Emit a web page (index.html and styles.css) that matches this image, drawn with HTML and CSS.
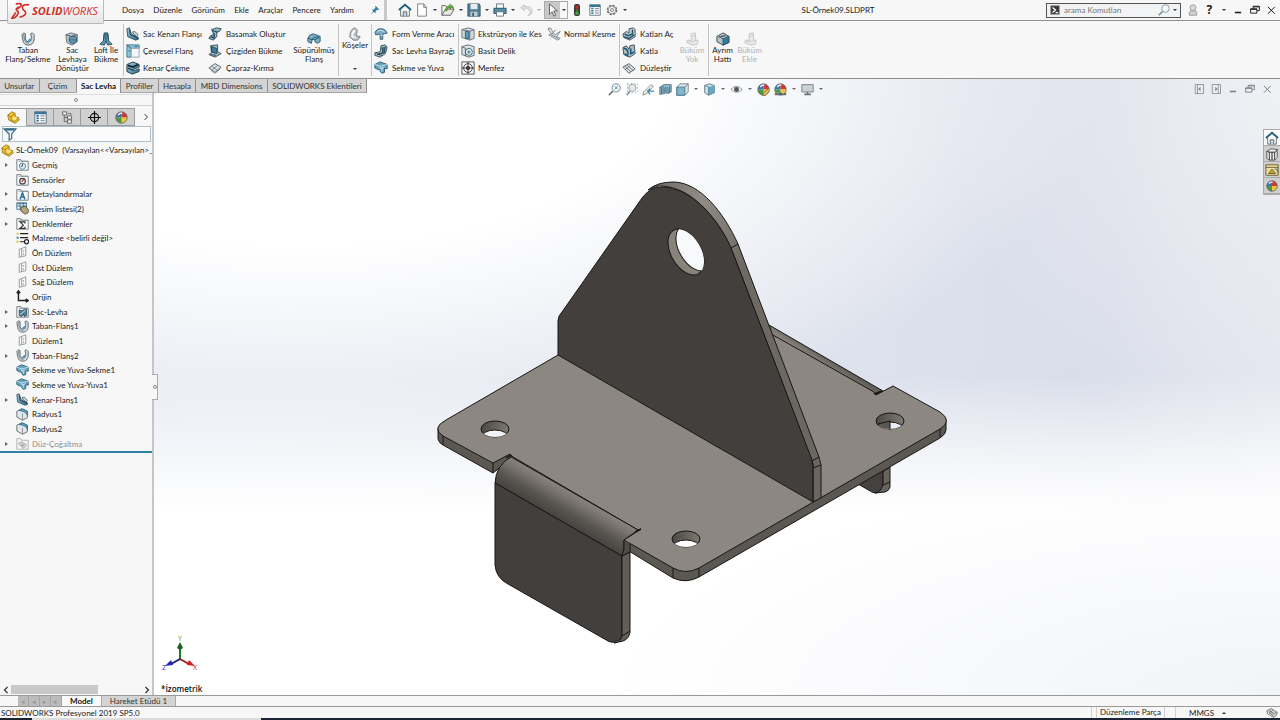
FILE: index.html
```html
<!DOCTYPE html>
<html lang="tr">
<head>
<meta charset="utf-8">
<title>SL-Örnek09.SLDPRT</title>
<link rel="stylesheet" href="styles.css">
</head>
<body>
<svg class="defs" aria-hidden="true">
<defs>
<linearGradient id="steel" x1="0" y1="0" x2="1" y2="1"><stop offset="0" stop-color="#9fcbdc"/><stop offset="1" stop-color="#2f7397"/></linearGradient>
<symbol id="flange" viewBox="0 0 16 16"><path d="M1 3l2-2 2 1v6q1 4 4 3 3-1 3-5l-1-4 2-1 2 2v6q-1 6-7 6-5 0-6-6z" fill="#d3d9dc" stroke="#4c5a62"/><path d="M8 9l3-2 1 3-3 2z" fill="#4995b5"/><path d="M3 2l1 7q1 4 5 4" fill="none" stroke="#6a7a82"/></symbol>
<symbol id="convert" viewBox="0 0 16 16"><path d="M1 3l6-2 7 2v8l-6 4-6-3z" fill="#bdc7cc" stroke="#596870"/><path d="M5 6q5-3 8 0v5q-4 4-8 0z" fill="#5b9dba" stroke="#2a566b"/><path d="M1 3l6 2 7-2M4 9h8" fill="none" stroke="#4a5961"/></symbol>
<symbol id="loft" viewBox="0 0 16 16"><path d="M6 1l-1 9-4 4 5 1 2-4 2 4 5-1-4-4-1-9z" fill="#579bb8" stroke="#35474f"/><path d="M8 1v10M6 2l-1 8M10 2l1 8" stroke="#234d63"/></symbol>
<symbol id="edge" viewBox="0 0 16 16"><path d="M1 2l3-1 2 7 8 4v2l-3 1-9-4z" fill="url(#steel)" stroke="#304b58"/><path d="M4 3l1 6 9 4M8 6l5 4" fill="none" stroke="#173746"/><path d="M7 6l3-1 4 4-2 2z" fill="#c7d7de" stroke="#4b5c65"/></symbol>
<symbol id="miter" viewBox="0 0 16 16"><path d="M1 1h14v4H6v10H1z" fill="#8fc4d7" stroke="#34738e"/><path d="M6 5h9v10H6z" fill="#f5f7f8" stroke="#98a4aa"/><path d="M1 1l5 4M3 8h2M10 3h3" stroke="#245267"/></symbol>
<symbol id="hem" viewBox="0 0 16 16"><path d="M1 4l7-3 7 3v3l-8 3-5-2 7 3 6-2v3l-8 3-6-3z" fill="url(#steel)" stroke="#24343d"/><path d="M2 5l6 2 6-3" fill="none" stroke="#15242d" stroke-width="2"/></symbol>
<symbol id="jog" viewBox="0 0 16 16"><path d="M4 3l6-2 5 1-2 3-3 1v5l-4 4-5-2 2-3 3-1V7z" fill="#8bb7c8" stroke="#2f4048"/><path d="M5 4l6 2M7 7v5M3 11l5 2" stroke="#26495a" stroke-width="1.5"/></symbol>
<symbol id="sketchbend" viewBox="0 0 16 16"><path d="M3 2l8-1v8l4 2-7 4-7-3 3-2z" fill="#a4bdc8" stroke="#354750"/><path d="M4 3l6 2v6l-6-2zM3 12l6 1" fill="#3d7d99" stroke="#254252"/></symbol>
<symbol id="cross" viewBox="0 0 16 16"><path d="M1 8l7-5 7 4-7 6z" fill="#dbe0e2" stroke="#59666c"/><path d="M4 6l7 5M5 10l6-5M3 10l5 4 6-5" fill="none" stroke="#6e7b82"/></symbol>
<symbol id="swept" viewBox="0 0 16 16"><path d="M1 7q1-4 6-5l8 3v6l-3 2-3-2V9L6 8l-1 5-4-2z" fill="#77afc5" stroke="#29566b"/><path d="M1 7l5 2q1-4 8-3M9 9l5-3" fill="none" stroke="#214b60"/></symbol>
<symbol id="corner" viewBox="0 0 16 16"><path d="M7 1q5 1 3 6l-1 3 5 1-3 4H6L2 11q0-7 5-10z" fill="#c0c7ca" stroke="#6d797f"/><path d="M8 4q-4 3-3 7l4 1" fill="none" stroke="#f9f9f9" stroke-width="2"/></symbol>
<symbol id="form" viewBox="0 0 16 16"><path d="M1 6q3-5 7-4 5 0 7 5l-5 1v6H7V8L2 9z" fill="#79aec4" stroke="#315466"/><path d="M4 5q4-3 8 1M7 9l3 1" fill="none" stroke="#d6e8ef"/></symbol>
<symbol id="gusset" viewBox="0 0 16 16"><path d="M8 2l5-1 2 3-2 7-6 4-6-2v-3l6-1z" fill="#a6b7bf" stroke="#35464e"/><path d="M9 4l1 6-6 2 8-2 1-7M3 11l6 2" fill="#327392" stroke="#1c4355"/></symbol>
<symbol id="tab" viewBox="0 0 16 16"><path d="M1 4l6-3 8 3v5l-3-1v5l-3 1-2-2V9L5 10 1 8z" fill="#62a4c0" stroke="#24566d"/><path d="M1 4l6 2 8-2M7 6v3l5-2M9 8v4" fill="none" stroke="#d8eaf2"/></symbol>
<symbol id="extcut" viewBox="0 0 16 16"><path d="M1 3l7-2 7 2v10l-5 2-9-3z" fill="#d0d7da" stroke="#627079"/><path d="M5 5h4v8H5z" fill="#5c9eb9" stroke="#2e5467"/><path d="M10 5l5-2M1 3l9 2v10" fill="none" stroke="#5f6c73"/></symbol>
<symbol id="hole" viewBox="0 0 16 16"><path d="M1 3l7-2 7 2v10l-6 2-8-3z" fill="#dce1e3" stroke="#56646b"/><circle cx="9" cy="9" r="4" fill="#edf3f5" stroke="#315d70"/><circle cx="9" cy="9" r="2" fill="#5d9db7"/><path d="M1 3l4 2v9" fill="none" stroke="#56646b"/></symbol>
<symbol id="vent" viewBox="0 0 16 16"><path d="M1 1h14v14H1z" fill="#f6f6f6" stroke="#4b4b4b"/><circle cx="8" cy="8" r="5" fill="none" stroke="#333"/><circle cx="8" cy="8" r="2" fill="#777" stroke="#222"/><path d="M1 8h14M8 1v14" stroke="#333"/></symbol>
<symbol id="normalcut" viewBox="0 0 16 16"><path d="M1 2l3-1 5 8 6-4-4 6 4 2-3 2-5-3-5-3 3-1z" fill="#dfe2e4" stroke="#7b868c"/><path d="M10 3l-5 6 8 4" fill="none" stroke="#6b767c"/></symbol>
<symbol id="unfold" viewBox="0 0 16 16"><path d="M1 8l4-3 3 2V2l5-1 2 2v8l-6 4-7-3z" fill="#c0c9cd" stroke="#3a474e"/><path d="M3 8l4 2 5-2V3M2 11l6 2 6-4" fill="none" stroke="#1c546f" stroke-width="1.6"/></symbol>
<symbol id="fold" viewBox="0 0 16 16"><path d="M1 4l4-2 3 4 1-4 5-1 1 10-6 4-7-3z" fill="#afbec5" stroke="#37454c"/><path d="M2 5q5 0 5 7M3 11l4 3M10 5v6l4-2" fill="none" stroke="#195b7d" stroke-width="1.8"/></symbol>
<symbol id="flatten" viewBox="0 0 16 16"><path d="M1 7l7-4 7 6-7 5z" fill="#e4e6e7" stroke="#4d565b"/><path d="M3 6l7 6M6 5l7 6M4 10l5-5" stroke="#596268"/></symbol>
<symbol id="nobend" viewBox="0 0 16 16"><path d="M7 2l5-1v8l3 1-1 4-5 1-7-3 1-3 4 1z" fill="#e9e9e9" stroke="#c3c3c3"/><path d="M7 5l5-1M3 10l6 1 5-2" fill="none" stroke="#c6c6c6"/></symbol>
<symbol id="rip" viewBox="0 0 16 16"><path d="M1 5l7-4 7 4v7l-7 3-7-4z" fill="#b8c3c8" stroke="#33434b"/><path d="M4 5l4 3 6-3v7l-6 3V8" fill="#347da0" stroke="#235069"/><path d="M3 6l8-2" stroke="#59676e" stroke-width="2"/></symbol>
<symbol id="house" viewBox="0 0 16 16"><path d="M3 7v8h10V7" fill="#f8f8f8" stroke="#59656c"/><path d="M1 8l7-6 7 6" fill="none" stroke="#245d7b" stroke-width="2"/><path d="M6 15v-5h4v5" fill="#c6d0d5" stroke="#59656c"/></symbol>
<symbol id="page" viewBox="0 0 16 16"><path d="M3 1h7l3 4v10H3z" fill="#fff" stroke="#757575"/><path d="M10 1v4h3" fill="none" stroke="#757575"/></symbol>
<symbol id="open" viewBox="0 0 16 16"><path d="M1 14V3h4l2 2h7v2" fill="#fafafa" stroke="#555"/><path d="M1 14L5 7h10l-4 7z" fill="#e6e8e5" stroke="#555"/><path d="M5 9q0-6 5-6V1l4 3-4 3V5q-3 0-3 4z" fill="#5bb536" stroke="#397d24" stroke-width=".5"/></symbol>
<symbol id="save" viewBox="0 0 16 16"><path d="M1 1h13l1 2v12H1z" fill="#557f95" stroke="#355262"/><path d="M4 1h8v6H4z" fill="#e5edf0"/><path d="M4 10h8v5H4z" fill="#bcc9cf"/><path d="M6 11h2v4H6z" fill="#3f5968"/></symbol>
<symbol id="print" viewBox="0 0 16 16"><path d="M4 1h8v6H4z" fill="#f7f9fa" stroke="#60717a"/><path d="M1 6h14v6H1z" fill="#548daa" stroke="#2d5267"/><path d="M4 10h8v5H4z" fill="#fff" stroke="#60717a"/></symbol>
<symbol id="undo" viewBox="0 0 16 16"><path d="M6 2L2 5l4 4V6q6-1 7 6l-3 2q5 0 5-5-1-6-9-5z" fill="#e1e1e1" stroke="#c2c2c2"/></symbol>
<symbol id="cursor" viewBox="0 0 16 16"><path d="M4 1v12l3-3 2 5 2-1-2-5h4z" fill="#f9f9f9" stroke="#555"/></symbol>
<symbol id="traffic" viewBox="0 0 16 16"><rect x="4" y="0" width="8" height="16" rx="3" fill="#38393b"/><circle cx="8" cy="4" r="2.5" fill="#b72d27"/><circle cx="8" cy="8" r="2" fill="#615b2e"/><circle cx="8" cy="12" r="2.5" fill="#3da542"/></symbol>
<symbol id="list" viewBox="0 0 16 16"><path d="M1 1h14v14H1z" fill="#f8fafb" stroke="#47606f"/><path d="M1 1h14v3H1z" fill="#387798"/><path d="M3 6h3M3 9h3M3 12h3" stroke="#387798" stroke-width="2"/><path d="M8 6h5M8 9h5M8 12h5" stroke="#5c666c"/></symbol>
<symbol id="gear" viewBox="0 0 16 16"><circle cx="8" cy="8" r="6" fill="#f7f7f7" stroke="#666" stroke-width="2" stroke-dasharray="3 1.7"/><circle cx="8" cy="8" r="5" fill="#f7f7f7" stroke="#777"/><circle cx="8" cy="8" r="2" fill="none" stroke="#666"/></symbol>
<symbol id="pin" viewBox="0 0 16 16"><path d="M9 1l6 6-2 1-1-1-3 3v3l-3-2-5 4 4-5-2-3h3l3-3-1-2z" fill="#3b7fa4"/></symbol>
<symbol id="search" viewBox="0 0 16 16"><circle cx="10" cy="6" r="5" fill="#f2f8fb" stroke="#6d8794"/><path d="M6 10l-5 5" stroke="#6d8794" stroke-width="2"/></symbol>
<symbol id="prompt" viewBox="0 0 16 16"><path d="M1 1h14v14H1z" fill="#3a3a3a" stroke="#999"/><path d="M4 4l5 4-5 4M9 12h4" fill="none" stroke="#fff" stroke-width="2"/></symbol>
<symbol id="user" viewBox="0 0 16 16"><circle cx="8" cy="5" r="4" fill="#d9d9d9" stroke="#8e8e8e"/><path d="M3 15v-4q1-3 5-2 4-1 5 2v4z" fill="#cfcfcf" stroke="#8e8e8e"/></symbol>
<symbol id="min" viewBox="0 0 16 16"><path d="M3 12h10" stroke="currentColor" stroke-width="2.5"/></symbol>
<symbol id="restore" viewBox="0 0 16 16"><path d="M5 6V2h10v7h-4M1 6h10v7H1zM1 7h10M5 3h10" fill="none" stroke="currentColor" stroke-width="1.5"/></symbol>
<symbol id="close" viewBox="0 0 16 16"><path d="M3 3l11 11M14 3L3 14" stroke="currentColor" stroke-width="1.6"/></symbol>
<symbol id="paneleft" viewBox="0 0 16 16"><path d="M3 2h11v12H3zM6 2v12" fill="none" stroke="currentColor"/><path d="M10 5v6L7 8z" fill="currentColor"/></symbol>
<symbol id="paneright" viewBox="0 0 16 16"><path d="M3 2h11v12H3zM11 2v12" fill="none" stroke="currentColor"/><path d="M7 5v6l3-3z" fill="currentColor"/></symbol>
<symbol id="part" viewBox="0 0 16 16"><path d="M1 5l5-4 4 2v4l4 1 1 3-5 4-8-4z" fill="#f2c534" stroke="#8d6e16"/><path d="M1 5l4 2 5-4M5 7v4l4 2 5-4" fill="none" stroke="#9c7a1a"/><path d="M6 8l4-1 3 2-4 3z" fill="#f9e38b"/></symbol>
<symbol id="config" viewBox="0 0 16 16"><path d="M2 1h5v4H2zM8 6h5v4H8zM8 11h5v4H8z" fill="#eee" stroke="#555"/><path d="M4 5v8h4M4 8h4M9 3h3v2" fill="none" stroke="#555"/></symbol>
<symbol id="target" viewBox="0 0 16 16"><circle cx="8" cy="8" r="5" fill="none" stroke="#111" stroke-width="1.5"/><path d="M8 0v16M0 8h16" stroke="#111" stroke-width="1.5"/></symbol>
<symbol id="ball" viewBox="0 0 16 16"><path d="M8 8L8 1A7 7 0 0 0 1 8z" fill="#3c72b4"/><path d="M8 8V1a7 7 0 0 1 7 7z" fill="#d43931"/><path d="M8 8h7a7 7 0 0 1-7 7z" fill="#f0c637"/><path d="M8 8v7a7 7 0 0 1-7-7z" fill="#4a9a43"/><circle cx="8" cy="8" r="7" fill="none" stroke="#59626c"/><path d="M4 5q2-3 5-2" fill="none" stroke="#fff" stroke-width="1.5"/></symbol>
<symbol id="filter" viewBox="0 0 16 16"><path d="M1 2h14l-5 6v5l-3 2V8z" fill="#e2f0f6" stroke="#326783" stroke-width="1.3"/><path d="M3 3h10" stroke="#326783" stroke-width="2"/></symbol>
<symbol id="folder" viewBox="0 0 16 16"><path d="M1 2h5l1 2h8v11H1z" fill="#fafafa" stroke="#5f686d"/><path d="M3 4h11" stroke="#8e999e"/></symbol>
<symbol id="history" viewBox="0 0 16 16"><use href="#folder"/><path d="M4 10q0-4 4-4 4 1 4 4-1 4-4 4-3 0-4-4" fill="#d8edf5" stroke="#34758f"/><path d="M8 7v3H6" fill="none" stroke="#334"/></symbol>
<symbol id="sensor" viewBox="0 0 16 16"><use href="#folder"/><circle cx="8" cy="10" r="3.5" fill="#eee" stroke="#444" stroke-width="1.5"/><path d="M7 11l3-4" stroke="#bb3434" stroke-width="1.5"/></symbol>
<symbol id="annot" viewBox="0 0 16 16"><use href="#folder"/><path d="M5 14L8 6l3 8M6 11h4" fill="none" stroke="#2e7194" stroke-width="1.8"/></symbol>
<symbol id="equation" viewBox="0 0 16 16"><use href="#folder"/><path d="M11 8V6H5l4 4-4 4h6v-2" fill="none" stroke="#333" stroke-width="1.5"/></symbol>
<symbol id="cutlist" viewBox="0 0 16 16"><path d="M1 1h12v8H1z" fill="#eaf3f7" stroke="#37677e"/><path d="M1 2h12M1 5h12M5 1v8M9 1v8" stroke="#37677e"/><path d="M6 7l5-2 4 4v4l-4 2-5-4z" fill="#b7a575" stroke="#444"/></symbol>
<symbol id="material" viewBox="0 0 16 16"><path d="M5 2h10M5 7h10M5 12h6" stroke="#222" stroke-width="1.5"/><circle cx="2" cy="2" r="1.5" fill="#dac84e"/><circle cx="2" cy="7" r="1.5" fill="#579bc0"/><circle cx="2" cy="12" r="1.5" fill="#dac84e"/><circle cx="13" cy="12" r="2.5" fill="none" stroke="#222" stroke-width="1.5"/></symbol>
<symbol id="plane" viewBox="0 0 16 16"><path d="M4 4l3-1v10l-3 1zM7 3l5-2v11l-5 1" fill="#f9f9f9" stroke="#838b90"/><path d="M9 5v2M9 9v2" stroke="#838b90"/></symbol>
<symbol id="origin" viewBox="0 0 16 16"><path d="M3 2v11h11M1 4l2-3 2 3M12 11l3 2-3 2" fill="none" stroke="#222" stroke-width="1.8"/></symbol>
<symbol id="sheet" viewBox="0 0 16 16"><use href="#folder"/><path d="M4 6l3 1 2-1 4-1v8l-3 1-1-3-2 3-3-1z" fill="#4c8198" stroke="#28495a"/><path d="M5 12l7-6" stroke="#eef3f5"/></symbol>
<symbol id="fillet" viewBox="0 0 16 16"><path d="M1 4l6-3 7 3v8l-6 3-7-4z" fill="#e2e6e8" stroke="#525e65"/><path d="M4 3l4-2 6 3v5q-1-4-6-5z" fill="#5da7c4" stroke="#2c6680"/><path d="M8 7v8" stroke="#7d898f"/></symbol>
<symbol id="flatpattern" viewBox="0 0 16 16"><path d="M1 2h5l1 2h8v11H1z" fill="#f2f2f2" stroke="#aaa"/><path d="M3 8l4-2 6 4-4 4z" fill="#d7d7d7" stroke="#999"/><circle cx="8" cy="10" r="1.5" fill="#aaa"/></symbol>
<symbol id="zoomfit" viewBox="0 0 16 16"><circle cx="10" cy="6" r="5" fill="#f4f7f8" stroke="#6d7a82"/><path d="M6 10l-5 5" stroke="#6d7a82" stroke-width="2"/><path d="M8 4l4 4M12 4L8 8" stroke="#3f82a4"/></symbol>
<symbol id="zoomarea" viewBox="0 0 16 16"><path d="M3 1h12v11H3z" fill="none" stroke="#9aa2a7" stroke-dasharray="2 2"/><circle cx="9" cy="6" r="4.5" fill="#e4e9ec" stroke="#8c979d"/><path d="M6 10l-4 5" stroke="#8c979d" stroke-width="2"/></symbol>
<symbol id="prevview" viewBox="0 0 16 16"><path d="M2 11l9-9 3 2-8 9-5 2z" fill="#e8eaeb" stroke="#7b858a"/><path d="M8 10h7M10 7l-3 3 3 4" fill="none" stroke="#4089ac" stroke-width="1.6"/></symbol>
<symbol id="section" viewBox="0 0 16 16"><path d="M1 5l5-3h9v9l-4 2V6H7v7l-6 1z" fill="#91bed0" stroke="#4a6470"/><path d="M7 6h4v7H7z" fill="#5f9ab5"/><path d="M3 5v8M5 4v9M13 4v8" stroke="#4a6470"/></symbol>
<symbol id="cube" viewBox="0 0 16 16"><path d="M1 5l4-4h10v10l-4 4H1z" fill="#e1e8ec" stroke="#5c7480"/><path d="M1 5h10v10H1z" fill="#82b6ca" stroke="#4a7486"/><path d="M11 5l4-4" stroke="#5c7480"/></symbol>
<symbol id="display" viewBox="0 0 16 16"><path d="M2 3l6-2 6 2v9l-7 3-5-3z" fill="#c9dfe8" stroke="#527482"/><path d="M7 5l7-2v9l-7 3z" fill="#65a8c1"/><path d="M2 3l5 2v10" fill="none" stroke="#527482"/></symbol>
<symbol id="eye" viewBox="0 0 16 16"><path d="M1 8q7-8 14 0-7 7-14 0z" fill="#eceeef" stroke="#848c90"/><circle cx="8" cy="8" r="3" fill="#50565a"/></symbol>
<symbol id="appearance" viewBox="0 0 16 16"><use href="#ball"/><path d="M8 12l6-5 2 2-5 6-4 1z" fill="#e3c064" stroke="#766639"/></symbol>
<symbol id="scene" viewBox="0 0 16 16"><use href="#ball"/><path d="M1 11l4 2 3-2 3 2 4-2v4H1z" fill="#555" stroke="#eee" stroke-width=".5"/></symbol>
<symbol id="monitor" viewBox="0 0 16 16"><path d="M1 2h14v9H1z" fill="#cbd2d6" stroke="#697278"/><path d="M8 11v3M4 14h8" stroke="#697278" stroke-width="2"/></symbol>
<symbol id="library" viewBox="0 0 16 16"><path d="M2 5l5-3 7 1-2 3H6zM2 5l3 1v9l-3-2zM5 6h3v9H5zM8 6h3v9H8zM11 6l3-3v9l-3 3z" fill="#eee" stroke="#555"/></symbol>
<symbol id="explorer" viewBox="0 0 16 16"><path d="M1 2h14v12H1z" fill="#f1dda0" stroke="#61572d"/><path d="M1 5h14M4 12l4-5 4 5z" fill="#c9a839" stroke="#61572d"/><path d="M11 7h3v4" fill="none" stroke="#2d6d8b"/></symbol>
<symbol id="tag" viewBox="0 0 16 16"><path d="M1 5l6-3 8 5-1 4-4 3-8-5z" fill="#d5d5d5" stroke="#666"/><path d="M4 5l7 4 3-2M4 7l6 5M9 4l-3 3" fill="none" stroke="#555"/></symbol>
</defs>
</svg>
<div class="app">
<header class="titlebar">
<a class="brand" href="#" aria-label="SOLIDWORKS">
<svg class="brand-mark" viewBox="0 0 20 20"><path d="M5 2q6-1 6 1-1 3-6 5l3-3M5 9q4 0 2 4-2 4-6 4l4-6M19 3q-7-1-7 3 0 2 3 4 2 4-6 6" fill="none" stroke="#cf3128" stroke-width="1.7"/></svg><span class="brand-name"><b>SOLID</b>WORKS</span></a>
<nav class="menu"><button>Dosya</button><button>Düzenle</button><button>Görünüm</button><button>Ekle</button><button>Araçlar</button><button>Pencere</button><button>Yardım</button></nav>
<button class="pin" aria-label="Sabitle"><svg class="i s10"><use href="#pin"/></svg></button>
<div class="quick">
<button class="q" aria-label="Giriş"><svg class="i"><use href="#house"/></svg></button>
<button class="q" aria-label="Yeni"><svg class="i"><use href="#page"/></svg></button><button class="drop" aria-label="Yeni seçenekleri"></button>
<button class="q" aria-label="Aç"><svg class="i"><use href="#open"/></svg></button><button class="drop" aria-label="Aç seçenekleri"></button>
<button class="q" aria-label="Kaydet"><svg class="i"><use href="#save"/></svg></button><button class="drop" aria-label="Kaydet seçenekleri"></button>
<button class="q" aria-label="Yazdır"><svg class="i"><use href="#print"/></svg></button><button class="drop" aria-label="Yazdır seçenekleri"></button>
<button class="q" aria-label="Geri al"><svg class="i"><use href="#undo"/></svg></button><button class="drop faint" aria-label="Geri al seçenekleri"></button>
<span class="select-tool"><button class="pick" aria-label="Seç"><svg class="i"><use href="#cursor"/></svg></button><button class="drop" aria-label="Seç seçenekleri"></button></span>
<button class="q wide" aria-label="Yeniden oluştur"><svg class="i s12"><use href="#traffic"/></svg></button>
<button class="q" aria-label="Dosya özellikleri"><svg class="i s12"><use href="#list"/></svg></button>
<button class="q" aria-label="Seçenekler"><svg class="i s12"><use href="#gear"/></svg></button><button class="drop" aria-label="Diğer seçenekler"></button>
</div>
<h1 class="doc-title">SL-Örnek09.SLDPRT</h1>
<form class="search"><svg class="i s10"><use href="#prompt"/></svg><input type="text" placeholder="arama Komutları" aria-label="arama Komutları"><button type="button" aria-label="Ara"><svg class="i s12"><use href="#search"/></svg></button><button type="button" class="drop" aria-label="Arama türü"></button></form>
<div class="window-tools"><button aria-label="Oturum"><svg class="i s12"><use href="#user"/></svg></button><button class="help">?</button><button class="drop" aria-label="Yardım seçenekleri"></button><button aria-label="Simge durumuna küçült"><svg class="i s10"><use href="#min"/></svg></button><button aria-label="Geri yükle"><svg class="i s10"><use href="#restore"/></svg></button><button aria-label="Kapat"><svg class="i s10"><use href="#close"/></svg></button></div>
</header>
<section class="ribbon" aria-label="Sac Levha komutları">
<div class="group g-base">
<button class="big first"><svg class="i"><use href="#flange"/></svg>Taban<br>Flanş/Sekme</button>
<button class="big"><svg class="i"><use href="#convert"/></svg>Sac<br>Levhaya<br>Dönüştür</button>
<button class="big"><svg class="i"><use href="#loft"/></svg>Loft İle<br>Bükme</button>
</div>
<div class="group g-flange">
<div class="stack"><button><svg class="i"><use href="#edge"/></svg>Sac Kenarı Flanşı</button><button><svg class="i"><use href="#miter"/></svg>Çevresel Flanş</button><button><svg class="i"><use href="#hem"/></svg>Kenar Çekme</button></div>
<div class="stack"><button><svg class="i"><use href="#jog"/></svg>Basamak Oluştur</button><button><svg class="i"><use href="#sketchbend"/></svg>Çizgiden Bükme</button><button><svg class="i"><use href="#cross"/></svg>Çapraz-Kırma</button></div>
<button class="big"><svg class="i"><use href="#swept"/></svg>Süpürülmüş<br>Flanş</button>
</div>
<div class="group g-corner"><button class="big tall"><svg class="i"><use href="#corner"/></svg>Köşeler<span class="caret"></span></button></div>
<div class="group g-form"><div class="stack"><button><svg class="i"><use href="#form"/></svg>Form Verme Aracı</button><button><svg class="i"><use href="#gusset"/></svg>Sac Levha Bayrağı</button><button><svg class="i"><use href="#tab"/></svg>Sekme ve Yuva</button></div></div>
<div class="group g-cut"><div class="stack"><button><svg class="i"><use href="#extcut"/></svg>Ekstrüzyon ile Kes</button><button><svg class="i"><use href="#hole"/></svg>Basit Delik</button><button><svg class="i"><use href="#vent"/></svg>Menfez</button></div><div class="stack"><button><svg class="i"><use href="#normalcut"/></svg>Normal Kesme</button></div></div>
<div class="group g-fold"><div class="stack"><button><svg class="i"><use href="#unfold"/></svg>Katları Aç</button><button><svg class="i"><use href="#fold"/></svg>Katla</button><button><svg class="i"><use href="#flatten"/></svg>Düzleştir</button></div><button class="big" disabled><svg class="i"><use href="#nobend"/></svg>Büküm<br>Yok</button></div>
<div class="group g-rip"><button class="big"><svg class="i"><use href="#rip"/></svg>Ayrım<br>Hattı</button><button class="big" disabled><svg class="i"><use href="#nobend"/></svg>Büküm<br>Ekle</button></div>
</section>
<main class="workspace">
<div class="tabrow">
<nav class="tabs"><button>Unsurlar</button><button>Çizim</button><button class="on">Sac Levha</button><button>Profiller</button><button>Hesapla</button><button>MBD Dimensions</button><button>SOLIDWORKS Eklentileri</button></nav>
<div class="hud">
<button aria-label="Sığdır"><svg class="i"><use href="#zoomfit"/></svg></button><button aria-label="Alana yakınlaştır"><svg class="i"><use href="#zoomarea"/></svg></button><button aria-label="Önceki görünüm"><svg class="i"><use href="#prevview"/></svg></button><button aria-label="Kesit"><svg class="i"><use href="#section"/></svg></button><button aria-label="Yönlendirme"><svg class="i"><use href="#cube"/></svg></button><button class="drop" aria-label="Yönlendirme seçenekleri"></button><button aria-label="Görüntü stili"><svg class="i"><use href="#display"/></svg></button><button class="drop" aria-label="Stil seçenekleri"></button><button aria-label="Gizle"><svg class="i"><use href="#eye"/></svg></button><button class="drop" aria-label="Gizleme seçenekleri"></button><button aria-label="Görünüm düzenle"><svg class="i"><use href="#appearance"/></svg></button><button aria-label="Sahne"><svg class="i"><use href="#scene"/></svg></button><button class="drop" aria-label="Sahne seçenekleri"></button><button aria-label="Görünüm ayarları"><svg class="i"><use href="#monitor"/></svg></button><button class="drop" aria-label="Ayar seçenekleri"></button>
</div>
<div class="doc-tools"><button aria-label="Sol bölme"><svg class="i s12"><use href="#paneleft"/></svg></button><button aria-label="Sağ bölme"><svg class="i s12"><use href="#paneright"/></svg></button><button aria-label="Küçült"><svg class="i s10"><use href="#min"/></svg></button><button aria-label="Önceki boyut"><svg class="i s10"><use href="#restore"/></svg></button><button aria-label="Belgeyi kapat"><svg class="i s10"><use href="#close"/></svg></button></div>
</div>
<div class="body">
<aside class="panel">
<div class="grip"><i></i></div>
<div class="panel-tabs"><button class="on" aria-label="Tasarım ağacı"><svg class="i"><use href="#part"/></svg></button><button aria-label="Özellikler"><svg class="i"><use href="#list"/></svg></button><button aria-label="Konfigürasyon"><svg class="i"><use href="#config"/></svg></button><button aria-label="Ölçüler"><svg class="i"><use href="#target"/></svg></button><button aria-label="Görüntü"><svg class="i"><use href="#ball"/></svg></button><button class="more" aria-label="Diğer"><svg class="i s8" viewBox="0 0 16 16"><path d="M5 2l6 6-6 6" fill="none" stroke="#444" stroke-width="2"/></svg></button></div>
<label class="filter"><svg class="i"><use href="#filter"/></svg><input type="text" aria-label="Filtre"></label>
<ul class="tree">
<li class="root"><svg class="i"><use href="#part"/></svg>SL-Örnek09&nbsp; (Varsayılan&lt;&lt;Varsayılan&gt;_</li>
<li class="more"><svg class="i"><use href="#history"/></svg>Geçmiş</li>
<li><svg class="i"><use href="#sensor"/></svg>Sensörler</li>
<li class="more"><svg class="i"><use href="#annot"/></svg>Detaylandırmalar</li>
<li class="more"><svg class="i"><use href="#cutlist"/></svg>Kesim listesi(2)</li>
<li class="more"><svg class="i"><use href="#equation"/></svg>Denklemler</li>
<li><svg class="i"><use href="#material"/></svg>Malzeme &lt;belirli değil&gt;</li>
<li><svg class="i"><use href="#plane"/></svg>Ön Düzlem</li>
<li><svg class="i"><use href="#plane"/></svg>Üst Düzlem</li>
<li><svg class="i"><use href="#plane"/></svg>Sağ Düzlem</li>
<li><svg class="i"><use href="#origin"/></svg>Orijin</li>
<li class="more"><svg class="i"><use href="#sheet"/></svg>Sac-Levha</li>
<li class="more"><svg class="i"><use href="#flange"/></svg>Taban-Flanş1</li>
<li><svg class="i"><use href="#plane"/></svg>Düzlem1</li>
<li class="more"><svg class="i"><use href="#flange"/></svg>Taban-Flanş2</li>
<li><svg class="i"><use href="#tab"/></svg>Sekme ve Yuva-Sekme1</li>
<li><svg class="i"><use href="#tab"/></svg>Sekme ve Yuva-Yuva1</li>
<li class="more"><svg class="i"><use href="#edge"/></svg>Kenar-Flanş1</li>
<li><svg class="i"><use href="#fillet"/></svg>Radyus1</li>
<li><svg class="i"><use href="#fillet"/></svg>Radyus2</li>
<li class="more off"><svg class="i"><use href="#flatpattern"/></svg>Düz-Çoğaltma</li>
</ul>
<div class="hscroll"><button aria-label="Sola kaydır"><svg class="i s8" viewBox="0 0 16 16"><path d="M11 2L5 8l6 6" fill="none" stroke="#333" stroke-width="2.5"/></svg></button><div class="track"><div class="thumb"></div></div><button aria-label="Sağa kaydır"><svg class="i s8" viewBox="0 0 16 16"><path d="M5 2l6 6-6 6" fill="none" stroke="#333" stroke-width="2.5"/></svg></button></div>
<button class="collapse" aria-label="Paneli daralt"><i></i></button>
</aside>
<section class="viewport" aria-label="Grafik alanı">
<svg class="model" viewBox="154 93 1126 602" preserveAspectRatio="xMidYMid meet">
<defs>
<linearGradient id="bend" gradientUnits="userSpaceOnUse" x1="579" y1="494" x2="561" y2="525"><stop offset="0" stop-color="#8c8780"/><stop offset=".25" stop-color="#7a756f"/><stop offset=".6" stop-color="#57534f"/><stop offset="1" stop-color="#423e3b"/></linearGradient>
<linearGradient id="bore"><stop offset="0" stop-color="#4b4844"/><stop offset="1" stop-color="#7d7973"/></linearGradient>
<linearGradient id="rim" x1="0" y1="0" x2="1" y2="1"><stop offset="0" stop-color="#6c6862"/><stop offset=".18" stop-color="#918c84"/><stop offset=".4" stop-color="#6f6a64"/><stop offset="1" stop-color="#6a655f"/></linearGradient>
<linearGradient id="backbend" gradientUnits="userSpaceOnUse" x1="830" y1="359" x2="824" y2="368"><stop offset="0" stop-color="#605c57"/><stop offset="1" stop-color="#8c8780"/></linearGradient>
<clipPath id="h1"><ellipse cx="495" cy="429" rx="14" ry="8"/></clipPath><clipPath id="h2"><ellipse cx="686" cy="539" rx="14" ry="8"/></clipPath><clipPath id="h3"><ellipse cx="890" cy="421" rx="14" ry="8"/></clipPath>
<clipPath id="h4"><ellipse cx="686" cy="252" rx="25" ry="15" transform="rotate(60 686 252)"/></clipPath>
</defs>
<g stroke="#181716" stroke-width="1" stroke-linejoin="round">
<path d="M858 484l14 8q5 3 11-4v-18z" fill="#45413e"/><path d="M883 472l7-5v20q-1 4-5 5l-10 1q5 0 8-8zM883 485l7-3" fill="#67635d"/>
<path d="M769 325l114 66-7 4-103-58z" fill="url(#backbend)"/>
<path d="M438 429v10q1 4 5 6l50 28 4-3 14-14 128 74-15 10v8l49 30q13 6 26-1l241-139q6-4 6-8v-10l-200 30z" fill="#5b5752"/>
<path d="M558 355l-112 65q-15 8-3 16l50 27 17-9 3 3 125 73 3-1-17 11 49 28q13 7 26 0l241-139q13-8 0-17l-47-26-17 9-2-3-101-57-100-35z" fill="#8c8780"/>
<path d="M443 436v9M493 463v10M673 568v10M699 568v9M940 429v8" fill="none"/>
<path d="M495 483q1-18 16-26l127 73-14 10v9l-2 7z" fill="url(#bend)"/>
<path d="M495 483v82q1 13 13 19l100 57q7 4 14-4v-81z" fill="#433f3c"/>
<path d="M622 556l8-4v80q-1 7-7 9l-9 2q8-1 8-9zM622 636l8-5" fill="#625d58"/>
<path d="M624 540v9l-2 7 8-4v-8" fill="#504c48"/>
<path d="M506 458l5-3M635 532l6-3M874 394l8-3" stroke-width="1.4"/>
<path d="M648 190q9-8 25-8c27 0 51 31 65 62l81 213 2 8v33l-8 4v-38l-82-216c-14-31-41-63-73-62z" fill="url(#rim)"/>
<path d="M558 355v-34q0-5 4-9l80-114q8-11 20-11c28 0 56 31 69 61l81 212 1 6v36z" fill="#433f3c"/>
<path d="M731 248l7-4M812 461l7-4M813 468l8-3" fill="none"/>
<ellipse cx="686" cy="252" rx="25" ry="15" transform="rotate(60 686 252)" fill="#88837b"/>
<g clip-path="url(#h4)"><ellipse cx="694" cy="248" rx="25" ry="15" transform="rotate(60 694 248)" fill="#f8f9fb"/></g>
<g fill="url(#bore)"><ellipse cx="495" cy="429" rx="14" ry="8"/><ellipse cx="686" cy="539" rx="14" ry="8"/><ellipse cx="890" cy="421" rx="14" ry="8"/></g>
<ellipse clip-path="url(#h1)" cx="495" cy="438" rx="14" ry="8" fill="#f1f3f9"/><ellipse clip-path="url(#h2)" cx="686" cy="548" rx="14" ry="8" fill="#fff"/><ellipse clip-path="url(#h3)" cx="890" cy="430" rx="14" ry="8" fill="#eceef5"/>
<path clip-path="url(#h3)" d="M878 424l12-3v10h-12z" fill="#5a5651"/>
</g>
</svg>
<div class="view-info">
<svg class="triad" viewBox="0 0 40 40"><path d="M20 26V13" stroke="#1f7a27" stroke-width="2"/><path d="M17 15l3-6 3 6-3 2z" fill="#17631f"/><path d="M20 26l9 5" stroke="#a51d1d" stroke-width="2"/><path d="M27 32l2-5 6 6z" fill="#cf1f1f"/><path d="M20 26l-9 5" stroke="#1c1c8c" stroke-width="2"/><path d="M13 32l-2-5-6 6z" fill="#1f25c9"/><text x="18" y="8" fill="#3b8f43">Y</text><text x="33" y="37" fill="#d23232">X</text><text x="2" y="37" fill="#2b34c9">Z</text></svg>
<p class="view-name">*İzometrik</p>
</div>
<nav class="taskpane"><button class="on" aria-label="Kaynaklar"><svg class="i"><use href="#house"/></svg></button><button aria-label="Tasarım kitaplığı"><svg class="i"><use href="#library"/></svg></button><button aria-label="Dosya gezgini"><svg class="i"><use href="#explorer"/></svg></button><button aria-label="Görünümler"><svg class="i s12"><use href="#ball"/></svg></button></nav>
</section>
</div>
</main>
<div class="sheets"><div class="steps"><button disabled>◂</button><button disabled>◂</button><button disabled>▸</button><button disabled>▸</button></div><button class="on">Model</button><button>Hareket Etüdü 1</button></div>
<footer class="status"><span class="product">SOLIDWORKS Profesyonel 2019 SP5.0</span><span class="cell gap"></span><span class="cell mode">Düzenleme Parça</span><span class="cell gap2"></span><button class="units">MMGS<span class="up"></span></button><button class="tagbtn" aria-label="Etiketler"><svg class="i s12"><use href="#tag"/></svg></button></footer>
<div class="edge"></div>
</div>
</body>
</html>
```

FILE: styles.css
```css
* { box-sizing: border-box; }
body { margin: 0; font: 8px/10px Lato, "Noto Sans", sans-serif; color: #1a1a1a; }
button { margin: 0; padding: 0; border: 0; background: none; font: inherit; color: inherit; display: flex; align-items: center; justify-content: center; white-space: nowrap; }
input { border: 0; background: none; padding: 0; font: inherit; min-width: 0; outline: 0; }
.defs { position: absolute; width: 0; height: 0; }
.i { width: 14px; height: 14px; flex: none; display: block; }
.s12 { width: 12px; height: 12px; }
.s10 { width: 10px; height: 10px; }
.s8 { width: 8px; height: 8px; }
.app { min-height: 100vh; display: flex; flex-direction: column; background: #f7f7f7; }
.drop { width: 10px; height: 14px; }
.drop::before, .caret::before { content: ""; border: 2px solid transparent; border-top-color: #333; border-bottom: 0; }
.faint::before { border-top-color: #aaa; }

.titlebar { height: 21px; flex: none; display: flex; align-items: center; border-bottom: 1px solid #8f8f8f; }
.brand { align-self: flex-start; margin-left: 7px; width: 97px; height: 24px; padding: 0 0 1px 3px; display: flex; align-items: center; gap: 2px; background: linear-gradient(#fdfdfd, #e6e6e6); border: 1px solid #bbb; border-top: 0; border-radius: 0 0 2px 2px; color: #cf3128; text-decoration: none; position: relative; z-index: 2; }
.brand-mark { width: 19px; height: 19px; }
.brand-name { font: italic 11px/20px "Open Sans", sans-serif; }
.menu { display: flex; justify-content: space-between; margin-left: 18px; width: 232px; }
.pin { width: 33px; height: 20px; padding-left: 12px; border-right: 3px solid #c9c9c9; }
.quick { display: flex; align-items: center; margin-left: 9px; height: 20px; }
.q { width: 17px; height: 18px; }
.drop + .q { width: 16px; }
.select-tool { display: flex; align-items: center; height: 18px; border: 1px solid #aaa; }
.pick { width: 15px; height: 16px; background: #c8c8c8; }
.select-tool .drop { width: 7px; }
.q.wide { width: 18px; }
.doc-title { flex: 1; margin: 0; font: inherit; text-align: center; }
.search { width: 135px; height: 15px; display: flex; align-items: center; padding-left: 3px; border: 1px solid #555; background: #f1f3f5; }
.search input { flex: 1; margin-left: 4px; height: 13px; }
.search input::placeholder { color: #777; opacity: 1; }
.window-tools { display: flex; align-items: center; margin-left: 5px; width: 94px; justify-content: space-between; padding-right: 2px; }
.window-tools button { width: 14px; height: 18px; }
.window-tools .drop { width: 10px; }
.window-tools .help { font: bold 12px/14px "Open Sans", sans-serif; }

.ribbon { height: 58px; flex: none; display: flex; border-bottom: 1px solid #8f8f8f; padding: 3px 0 2px; }
.group { display: flex; align-items: flex-start; border-right: 1px solid #c4c4c4; }
.g-base { width: 124px; }
.g-flange { width: 215px; padding-left: 2px; }
.g-corner { width: 33px; }
.g-form { width: 87px; padding-left: 2px; }
.g-cut { width: 161px; padding-left: 2px; }
.g-fold { width: 89px; padding-left: 2px; }
.g-rip { border: 0; }
.stack { display: flex; flex-direction: column; padding-top: 1px; width: 82px; }
.stack button { height: 17px; gap: 4px; justify-content: flex-start; }
.g-flange .stack:first-child button, .g-cut button { gap: 3px; }
.g-cut .stack:first-child { width: 86px; flex: none; }
.g-cut .stack { width: 70px; }
.g-fold .stack { width: 55px; }
.big { width: 34px; flex-direction: column; justify-content: flex-start; padding-top: 8px; line-height: 9px; }
.big.first { width: 56px; }
.g-flange .big { width: 48px; }
.g-fold .big { width: 30px; }
.g-rip .big { width: 27px; }
.big.tall { width: 32px; padding-top: 3px; }
.tall .caret { margin-top: 18px; display: flex; }
.big:disabled { color: #b2b2b2; }

.workspace { flex: 1; display: flex; flex-direction: column; background:
  radial-gradient(ellipse 26% 62% at 100% 0, rgba(244,244,246,.8), rgba(244,244,246,0)),
  radial-gradient(ellipse 52% 36% at 100% 100%, rgba(240,242,247,.9), rgba(240,242,247,0)),
  linear-gradient(rgba(255,255,255,0) 48%, rgba(255,255,255,.6) 60%, #fff 70%),
  radial-gradient(ellipse 62% 60% at 24% 0, #fff 45%, rgba(255,255,255,0)),
  linear-gradient(95deg, #e2e7f1 20%, #dfe3ed 60%, #d9dde9 85%, #e3e6ef); }
.tabrow { height: 14px; flex: none; display: flex; align-items: flex-start; }
.tabs { display: flex; height: 14px; background: #d4d4d4; width: 367px; border-bottom: 1px solid #a5a5a5; }
.tabs button { flex: 1 0 auto; min-width: 37px; border-right: 1px solid #8f8f8f; color: #333; }
.tabs .on { background: #f7f7f7; color: #111; font-weight: 700; height: 14px; }
.hud { display: flex; align-items: center; margin-left: 239px; height: 20px; }
.hud button { width: 17px; height: 18px; }
.hud .drop { width: 10px; }
.hud .drop::before { border-top-color: #666; }
.hud .i { width: 13px; height: 13px; }
.doc-tools { display: flex; margin-left: auto; padding-right: 6px; gap: 3px; color: #7c828a; }
.doc-tools button { width: 14px; height: 20px; }
.body { flex: 1; display: flex; }
.panel { position: relative; width: 154px; flex: none; display: flex; flex-direction: column; background: #f7f7f7; border-right: 2px solid #c6c6c6; }
.grip { height: 12px; flex: none; margin-top: 1px; display: flex; align-items: center; justify-content: center; border-bottom: 1px solid #d4d4d4; border-top: 1px solid #dedede; }
.grip i, .collapse i { width: 4px; height: 4px; border: 1px solid #888; border-radius: 50%; }
.panel-tabs { height: 18px; flex: none; margin-top: 2px; display: flex; }
.panel-tabs button { width: 27px; background: #d0d0d0; border: 1px solid #9c9c9c; border-left: 0; }
.panel-tabs .on { background: #f7f7f7; border-bottom: 0; }
.panel-tabs .more { flex: 1; background: none; border: 0; padding-left: 5px; }
.panel-tabs .i { width: 13px; height: 13px; }
.panel-tabs .s8 { width: 8px; height: 8px; }
.filter { height: 16px; margin: 0 1px 0 2px; display: flex; align-items: center; border: 1px solid #aebfc8; background: #fbfbfb; }
.filter input { flex: 1; height: 14px; }
.tree { list-style: none; margin: 0; padding: 1px 0 0; height: 311px; display: grid; grid-auto-rows: 1fr; border-bottom: 2px solid #3180a6; overflow: hidden; }
.tree li { display: flex; align-items: center; gap: 3px; padding-left: 16px; white-space: nowrap; }
.tree .i { width: 13px; height: 13px; }
.tree .root { padding-left: 1px; gap: 2px; }
.tree .more { padding-left: 5px; }
.tree .more::before { content: ""; border: 2px solid transparent; border-left: 3px solid #666; border-right: 0; margin-right: 5px; }
.tree .off { color: #8d8d8d; }
.hscroll { margin-top: auto; height: 10px; display: flex; }
.hscroll button { width: 11px; height: 10px; }
.track { flex: 1; }
.thumb { width: 67%; height: 9px; background: #c9c9c9; }
.collapse { position: absolute; left: 152px; top: 281px; width: 6px; height: 26px; background: #f7f7f7; border: 1px solid #aaa; border-left: 0; }
.viewport { position: relative; flex: 1; display: flex; }
.model { width: 100%; flex: 1; height: auto; display: block; }
.view-info { position: absolute; left: 6px; bottom: 0; }
.triad { width: 40px; height: 40px; display: block; font: 7px "Open Sans", sans-serif; }
.view-name { margin: 11px 0 1px 1px; font: 600 8px/10px "Open Sans", sans-serif; color: #111; }
.taskpane { position: absolute; right: 0; top: 36px; width: 17px; border: 1px solid #aaa; border-right: 0; }
.taskpane button { width: 16px; height: 16px; background: #cfcfcf; border-bottom: 1px solid #aaa; }
.taskpane .on { background: #f9f9f9; }

.sheets { height: 11px; flex: none; display: flex; border-top: 1px solid #999; }
.steps { display: flex; margin-left: 18px; }
.steps button { width: 11px; background: #bbb; color: #999; border-right: 1px solid #a5a5a5; font-size: 7px; }
.sheets > button { padding: 0 8px; background: #d4d4d4; border-right: 1px solid #aaa; color: #333; }
.sheets > .on { background: #fafafa; font-weight: 700; color: #111; }
.status { height: 12px; flex: none; display: flex; align-items: center; border-top: 1px solid #999; }
.product { flex: 1; padding-left: 1px; }
.cell { height: 11px; border-left: 1px solid #d2d2d2; }
.gap { width: 5px; }
.mode { width: 68px; padding-left: 3px; white-space: nowrap; }
.gap2 { width: 12px; border-right: 1px solid #d2d2d2; }
.units { width: 88px; padding-left: 13px; gap: 8px; justify-content: flex-start; }
.up { border: 2px solid transparent; border-bottom-color: #333; border-top: 0; }
.tagbtn { width: 16px; height: 11px; }
.edge { height: 2px; flex: none; background: linear-gradient(90deg, #1c2430 32px, #dcdcdc 32px 261px, #1c2433 261px); }
```
